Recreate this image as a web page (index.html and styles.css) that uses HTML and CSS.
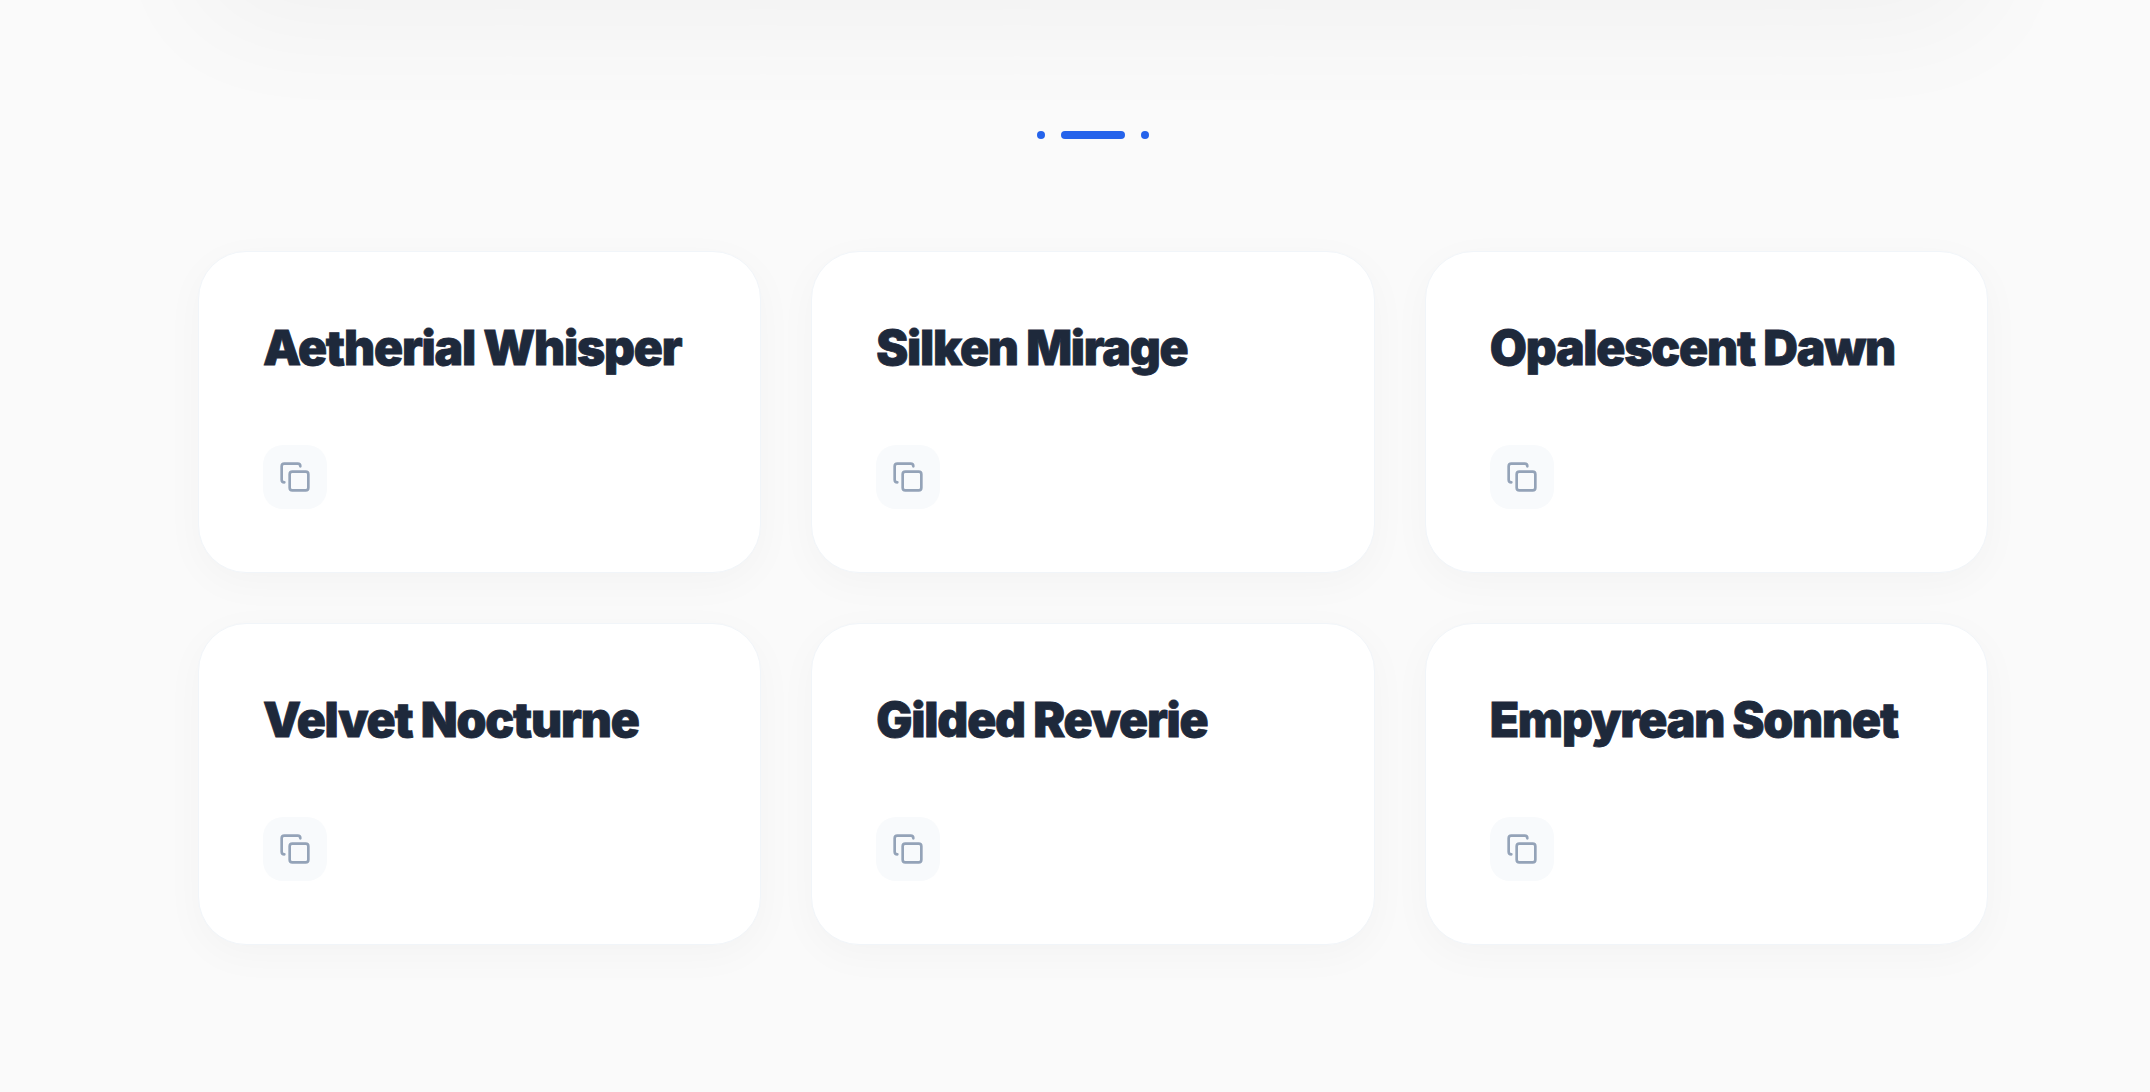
FILE: index.html
```html
<!DOCTYPE html>
<html lang="en">
<head>
    <meta charset="UTF-8">
    <title>Collection</title>
    <link rel="stylesheet" href="styles.css">
</head>
<body>
<div class="page">
    <div class="hero"></div>

    <div class="pager">
        <span class="dot"></span>
        <span class="bar"></span>
        <span class="dot"></span>
    </div>

    <div class="cards">
        <div class="card">
            <h3 class="card_title">Aetherial Whisper</h3>
            <button class="copy_btn"><svg class="copy_icon" viewBox="0 0 24 24"><rect x="8" y="8" width="14" height="14" rx="2"/><path d="M4 16c-1.1 0-2-.9-2-2V4c0-1.1.9-2 2-2h10c1.1 0 2 .9 2 2"/></svg></button>
        </div>
        <div class="card">
            <h3 class="card_title">Silken Mirage</h3>
            <button class="copy_btn"><svg class="copy_icon" viewBox="0 0 24 24"><rect x="8" y="8" width="14" height="14" rx="2"/><path d="M4 16c-1.1 0-2-.9-2-2V4c0-1.1.9-2 2-2h10c1.1 0 2 .9 2 2"/></svg></button>
        </div>
        <div class="card">
            <h3 class="card_title">Opalescent Dawn</h3>
            <button class="copy_btn"><svg class="copy_icon" viewBox="0 0 24 24"><rect x="8" y="8" width="14" height="14" rx="2"/><path d="M4 16c-1.1 0-2-.9-2-2V4c0-1.1.9-2 2-2h10c1.1 0 2 .9 2 2"/></svg></button>
        </div>
        <div class="card">
            <h3 class="card_title">Velvet Nocturne</h3>
            <button class="copy_btn"><svg class="copy_icon" viewBox="0 0 24 24"><rect x="8" y="8" width="14" height="14" rx="2"/><path d="M4 16c-1.1 0-2-.9-2-2V4c0-1.1.9-2 2-2h10c1.1 0 2 .9 2 2"/></svg></button>
        </div>
        <div class="card">
            <h3 class="card_title">Gilded Reverie</h3>
            <button class="copy_btn"><svg class="copy_icon" viewBox="0 0 24 24"><rect x="8" y="8" width="14" height="14" rx="2"/><path d="M4 16c-1.1 0-2-.9-2-2V4c0-1.1.9-2 2-2h10c1.1 0 2 .9 2 2"/></svg></button>
        </div>
        <div class="card">
            <h3 class="card_title">Empyrean Sonnet</h3>
            <button class="copy_btn"><svg class="copy_icon" viewBox="0 0 24 24"><rect x="8" y="8" width="14" height="14" rx="2"/><path d="M4 16c-1.1 0-2-.9-2-2V4c0-1.1.9-2 2-2h10c1.1 0 2 .9 2 2"/></svg></button>
        </div>
    </div>
</div>
</body>
</html>
```

FILE: styles.css
```css
* {
    box-sizing: border-box;
    margin: 0;
    padding: 0;
}

html, body {
    height: 100%;
    overflow: hidden;
}

body {
    background-color: #fafafa;
    font-family: "Inter", "Liberation Sans", sans-serif;
}

.page {
    padding: 0 162px 0 198px;
}

.hero {
    height: 200px;
    margin-top: -200px;
    border-radius: 48px;
    box-shadow: 0 25px 120px rgba(0, 0, 0, 0.04);
}

.pager {
    display: flex;
    justify-content: center;
    align-items: center;
    gap: 16px;
    margin-top: 131px;
    margin-bottom: 112px;
}

.dot {
    width: 8px;
    height: 8px;
    border-radius: 50%;
    background-color: #2563eb;
}

.bar {
    width: 64px;
    height: 8px;
    border-radius: 4px;
    background-color: #2563eb;
}

.cards {
    display: grid;
    grid-template-columns: repeat(3, 1fr);
    column-gap: 50px;
    row-gap: 50px;
}

.card {
    height: 322px;
    padding: 64px;
    background-color: #fff;
    border: 1px solid #f1f5f9;
    border-radius: 48px;
    box-shadow: 0 10px 40px rgba(0, 0, 0, 0.03);
}

.card_title {
    height: 64px;
    margin-bottom: 65px;
    color: #1e293b;
    font-size: 48px;
    font-weight: 900;
    line-height: 64px;
    letter-spacing: -1.2px;
    white-space: nowrap;
    -webkit-text-stroke: 0.8px #1e293b;
}

.copy_btn {
    display: flex;
    align-items: center;
    justify-content: center;
    width: 64px;
    height: 64px;
    border: none;
    border-radius: 20px;
    background-color: #f8fafc;
}

.copy_icon {
    width: 32px;
    height: 32px;
    fill: none;
    stroke: #94a3b8;
    stroke-width: 2;
    stroke-linecap: round;
    stroke-linejoin: round;
}
```
